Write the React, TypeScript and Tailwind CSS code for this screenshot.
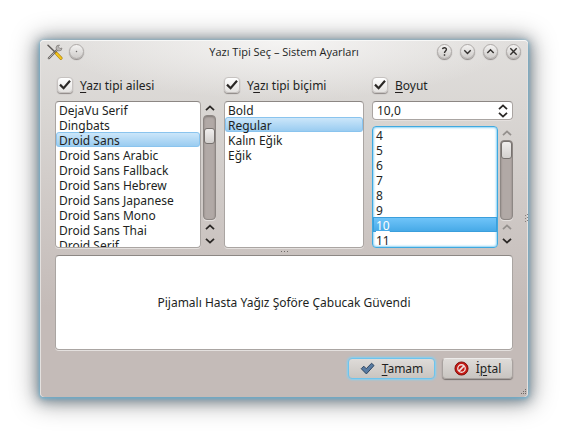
import { useState, type ReactNode } from "react";

const families = [
  "DejaVu Serif",
  "Dingbats",
  "Droid Sans",
  "Droid Sans Arabic",
  "Droid Sans Fallback",
  "Droid Sans Hebrew",
  "Droid Sans Japanese",
  "Droid Sans Mono",
  "Droid Sans Thai",
  "Droid Serif",
];
const styles = ["Bold", "Regular", "Kalın Eğik", "Eğik"];
const sizes = ["4", "5", "6", "7", "8", "9", "10", "11"];

const mnemonic = "underline decoration-1 underline-offset-2";
const field =
  "rounded-[4px] border border-[#aaa5a2] border-t-[#8c8784] bg-white shadow-[0_1px_0_#e4e0de]";

function Chevron({ up = false, muted = false }: { up?: boolean; muted?: boolean }) {
  return (
    <svg viewBox="0 0 10 6" className={`h-1.5 w-2.5 fill-none ${muted ? "stroke-[#94908d]" : "stroke-[#2a2725]"}`} strokeWidth="1.8">
      <path d={up ? "M1 5.2 5 1.4 9 5.2" : "M1 .8 5 4.6 9 .8"} />
    </svg>
  );
}

function TitleButton({ label, children }: { label: string; children: ReactNode }) {
  return (
    <button
      type="button"
      aria-label={label}
      className="grid size-[15px] place-items-center rounded-full border border-[#aeaaa8] bg-linear-to-b from-[#f4f3f2] to-[#cfccca] shadow-[0_1px_1px_#8d8886]"
    >
      <svg viewBox="0 0 13 13" className="size-[13px] fill-none stroke-[#33302e]" strokeWidth="1.4">
        {children}
      </svg>
    </button>
  );
}

function Check({ id, className, children }: { id: string; className?: string; children: ReactNode }) {
  return (
    <div className={`flex h-[18px] items-center gap-[7px] ${className ?? ""}`}>
      <span className="grid size-4 shrink-0">
        <input
          id={id}
          type="checkbox"
          defaultChecked
          className="peer col-start-1 row-start-1 size-4 appearance-none rounded-[4px] border border-[#c6c2c0] bg-linear-to-b from-white to-[#e4e2e0] shadow-[0_1px_1px_#8d8886]"
        />
        <svg
          viewBox="0 0 16 16"
          className="pointer-events-none invisible col-start-1 row-start-1 size-4 fill-none stroke-[#2b2826] peer-checked:visible"
          strokeWidth="2.2"
        >
          <path d="M3 7.6 6.6 11.2 13 3.8" />
        </svg>
      </span>
      <label htmlFor={id} className="whitespace-nowrap">
        {children}
      </label>
    </div>
  );
}

function ScrollBar({ muted = false, thumb }: { muted?: boolean; thumb: string }) {
  return (
    <div className="flex w-[13px] shrink-0 flex-col items-center">
      <button type="button" aria-label="Yukarı" className="grid h-3.5 shrink-0 place-items-center">
        <Chevron up muted={muted} />
      </button>
      <div className="w-full grow rounded-[4px] border border-[#8d8784] bg-[#b1a9a6] shadow-[inset_0_1px_2px_#807a77,0_1px_0_#e4e0de]">
        <div className={`w-full rounded-[3px] border border-[#77726f] bg-linear-to-b from-[#f0eeed] to-[#d3d0ce] ${thumb}`} />
      </div>
      <button type="button" aria-label="Yukarı" className="grid h-3.5 shrink-0 place-items-center">
        <Chevron up muted={muted} />
      </button>
      <button type="button" aria-label="Aşağı" className="grid h-3.5 shrink-0 place-items-center">
        <Chevron />
      </button>
    </div>
  );
}

function ListBox({ label, items, initial, active = false }: { label: string; items: string[]; initial: string; active?: boolean }) {
  const [value, setValue] = useState(initial);
  const chosen = active
    ? "bg-linear-to-b from-[#72c6fa] to-[#43a8e6] text-white underline shadow-[inset_0_0_0_1px_#3b9fdc]"
    : "rounded-[3px] bg-linear-to-b from-[#cfe8fa] to-[#96caf0] text-[#221f1e] shadow-[inset_0_0_0_1px_#8ac4ee]";
  return (
    <select
      aria-label={label}
      size={8}
      value={value}
      onChange={(e) => setValue(e.target.value)}
      className={`h-full min-w-0 grow appearance-none overflow-hidden p-0 outline-none ${
        active ? "rounded-[4px] border border-[#3fa9e0] bg-white shadow-[inset_0_0_2px_1px_#8fd3f5]" : field
      }`}
    >
      {items.map((item) => (
        <option key={item} value={item} className={`h-[15px] min-h-0 px-[3px] py-0 leading-[15px] ${item === value ? chosen : ""}`}>
          {item}
        </option>
      ))}
    </select>
  );
}

export default function App() {
  return (
    <main className="min-h-screen bg-white p-10 font-['Noto_Sans','Open_Sans',sans-serif] text-[12px] leading-[15px] text-[#221f1e]">
      <section
        aria-label="Yazı Tipi Seç"
        className="relative rounded-[4px] bg-[radial-gradient(ellipse_230px_60px_at_50%_0,#f5f4f3,transparent),linear-gradient(#e1dfdd,#d9d6d3_20%,#c4bbb8_75%)] px-[15px] pb-[18px] shadow-[inset_0_1px_0_#f8f8f7,inset_1px_0_0_#e4e1df,inset_-1px_0_0_#e4e1df,0_1px_3px_1px_#69b0d2c0,0_2px_12px_2px_#3c5a6e90,0_2px_24px_5px_#00000058]"
      >
        <header className="-mx-[15px] grid h-[23px] grid-cols-[1fr_auto_1fr] items-center px-[7px]">
          <div className="flex items-center gap-1.5">
            <svg viewBox="0 0 16 16" className="size-4 fill-none" strokeLinecap="round">
              <path d="M1.8 14.2 10.5 5.5" stroke="#66625f" strokeWidth="2.2" />
              <path d="M1.8 14.2 10.5 5.5" stroke="#b5b3b1" strokeWidth="1" />
              <path d="M12.2 1A3 3 0 1 0 15 4L13 4.6 11.5 3Z" fill="#b9b6b4" stroke="#7f7b78" strokeWidth=".7" />
              <path d="M1 1.2 8.5 8.5" stroke="#5e5a58" strokeWidth="1.5" />
              <path d="m9.5 9.5 4.4 4.7" stroke="#a87b08" strokeWidth="3.2" />
              <path d="m9.5 9.5 4.4 4.7" stroke="#f3c419" strokeWidth="2.1" />
            </svg>
            <TitleButton label="Pencere menüsü">
              <circle cx="6.5" cy="6.5" r=".3" strokeWidth=".8" />
            </TitleButton>
          </div>
          <h1 className="font-['Open_Sans','Noto_Sans',sans-serif] text-[11px]">Yazı Tipi Seç – Sistem Ayarları</h1>
          <div className="flex justify-end gap-2">
            <TitleButton label="Yardım">
              <path d="M4.5 4.2C4.8 2.3 8.5 2.3 8.4 4.5 8.3 6 6.5 6 6.5 8M6.5 9.2v1.5" />
            </TitleButton>
            <TitleButton label="Küçült">
              <path d="M3.3 5.2 6.5 8.4 9.7 5.2" />
            </TitleButton>
            <TitleButton label="Büyüt">
              <path d="M3.3 8 6.5 4.8 9.7 8" />
            </TitleButton>
            <TitleButton label="Kapat">
              <path d="m3.3 3.3 6.4 6.4m0-6.4L3.3 9.7" />
            </TitleButton>
          </div>
        </header>

        <div className="mt-[13px] grid grid-cols-[minmax(0,161fr)_minmax(0,140fr)_minmax(0,141fr)] gap-x-2 gap-y-[7px]">
          <Check id="family" className="pl-0.5">
            <span className={mnemonic}>Y</span>azı tipi ailesi
          </Check>
          <Check id="style">
            Y<span className={mnemonic}>a</span>zı tipi biçimi
          </Check>
          <Check id="size">
            <span className={mnemonic}>B</span>oyut
          </Check>

          <div className="flex h-[147px] gap-0.5">
            <ListBox label="Yazı tipi ailesi" items={families} initial="Droid Sans" />
            <ScrollBar thumb="mt-3 h-4" />
          </div>
          <div className="flex h-[147px]">
            <ListBox label="Yazı tipi biçimi" items={styles} initial="Regular" />
          </div>
          <div className="flex h-[147px] flex-col gap-1.5">
            <div className={`flex h-[19px] shrink-0 items-center px-1 ${field}`}>
              <input aria-label="Boyut" defaultValue="10,0" className="w-0 min-w-0 grow bg-transparent outline-none" />
              <div className="flex flex-col gap-0.5">
                <button type="button" aria-label="Artır">
                  <Chevron up />
                </button>
                <button type="button" aria-label="Azalt">
                  <Chevron />
                </button>
              </div>
            </div>
            <div className="flex min-h-0 grow gap-0.5">
              <ListBox label="Boyut listesi" items={sizes} initial="10" active />
              <ScrollBar muted thumb="h-[18px]" />
            </div>
          </div>
        </div>

        <div className="flex h-[7px] items-center justify-center gap-0.5">
          <i className="size-px bg-[#6f6a67]" />
          <i className="size-px bg-[#6f6a67]" />
          <i className="size-px bg-[#6f6a67]" />
        </div>

        <input
          aria-label="Önizleme"
          defaultValue="Pijamalı Hasta Yağız Şoföre Çabucak Güvendi"
          className={`block h-[95px] w-full text-center outline-none ${field}`}
        />

        <div className="mt-2 flex justify-end gap-[7px]">
          <button
            type="button"
            className="flex h-[21px] w-[87px] items-center justify-center gap-[7px] rounded-[4px] border border-[#6cc4ee] bg-linear-to-b from-[#dedbd8] to-[#c9c5c1] shadow-[0_0_2px_1px_#83d0f4]"
          >
            <svg viewBox="0 0 16 16" className="size-[15px]">
              <path d="M1.3 8.2 4 5.5l2.7 2.7L12.3 2.4 15 4.8 6.8 13.8Z" fill="#587ba2" stroke="#29415e" />
            </svg>
            <span>
              <span className={mnemonic}>T</span>amam
            </span>
          </button>
          <button
            type="button"
            className="flex h-[21px] w-[71px] items-center justify-center gap-[7px] rounded-[4px] border border-[#a8a29f] border-t-[#eeeceb] bg-linear-to-b from-[#dedbd8] to-[#c9c5c1] shadow-[0_1px_1px_#76706d]"
          >
            <svg viewBox="0 0 16 16" className="size-[15px]">
              <circle cx="8" cy="8" r="7" fill="#c51b16" stroke="#7e0c09" />
              <circle cx="8" cy="8" r="4" fill="none" stroke="#efe3e1" strokeWidth="1.4" />
              <path d="m5.3 10.7 5.4-5.4" stroke="#efe3e1" strokeWidth="1.8" />
            </svg>
            <span>
              İ<span className={mnemonic}>p</span>tal
            </span>
          </button>
        </div>

        <svg viewBox="0 0 6 6" className="absolute right-0.5 bottom-0.5 size-1.5 fill-[#6f6a67]">
          <path d="M5 0h1v1H5zM3 2h1v1H3zM5 2h1v1H5zM1 4h1v1H1zM3 4h1v1H3zM5 4h1v1H5z" />
        </svg>
        <svg viewBox="0 0 3 9" className="absolute top-[174px] right-0 h-[9px] w-[3px] fill-[#85807d]">
          <path d="M0 1h1v1H0zM2 0h1v1H2zM0 4h1v1H0zM2 3h1v1H2zM0 7h1v1H0zM2 6h1v1H2z" />
        </svg>
      </section>
    </main>
  );
}
